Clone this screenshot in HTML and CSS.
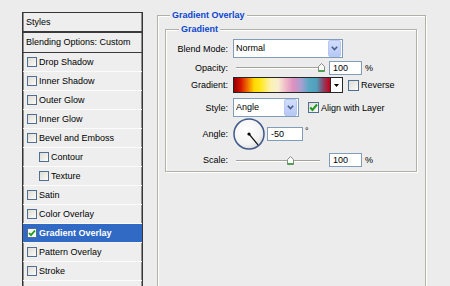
FILE: index.html
```html
<!DOCTYPE html>
<html>
<head>
<meta charset="utf-8">
<link rel="stylesheet" href="styles.css">
</head>
<body>
<div class="dialog">
  <div class="styles-panel">
    <div class="panel-head">Styles</div>
    <div class="panel-blend">Blending Options: Custom</div>
    <ul class="fx-list">
      <li class="fx"><span class="cb"></span>Drop Shadow</li>
      <li class="fx"><span class="cb"></span>Inner Shadow</li>
      <li class="fx"><span class="cb"></span>Outer Glow</li>
      <li class="fx"><span class="cb"></span>Inner Glow</li>
      <li class="fx"><span class="cb"></span>Bevel and Emboss</li>
      <li class="fx sub"><span class="cb"></span>Contour</li>
      <li class="fx sub"><span class="cb"></span>Texture</li>
      <li class="fx"><span class="cb"></span>Satin</li>
      <li class="fx"><span class="cb"></span>Color Overlay</li>
      <li class="fx selected"><span class="cb"><svg class="check" viewBox="0 0 8 8" width="8" height="8"><path d="M1 4 L3 6.2 L7 1.5" fill="none" stroke="#1f9a1f" stroke-width="1.8"/></svg></span>Gradient Overlay</li>
      <li class="fx"><span class="cb"></span>Pattern Overlay</li>
      <li class="fx"><span class="cb"></span>Stroke</li>
    </ul>
  </div>

  <div class="effects">
    <div class="group outer">
      <div class="group-title">Gradient Overlay</div>
      <div class="group inner">
        <div class="group-title">Gradient</div>
        <div class="form">
          <div class="row r-blend">
            <span class="lbl">Blend Mode:</span>
            <div class="combo w-blend">
              <span class="combo-val">Normal</span>
              <span class="combo-btn"><svg viewBox="0 0 7 5" width="7" height="5"><path d="M0.8 0.8 L3.5 3.6 L6.2 0.8" fill="none" stroke="#4a5f88" stroke-width="1.6"/></svg></span>
            </div>
          </div>
          <div class="row r-opacity">
            <span class="lbl">Opacity:</span>
            <div class="slider">
              <div class="track"></div>
              <svg class="handle" style="left:85px" viewBox="0 0 7 9" width="7" height="9"><path d="M0.5 8.5 V3.5 L3.5 0.5 L6.5 3.5 V8.5 Z" fill="#fafafa" stroke="#8a8a8a" stroke-width="1"/><path d="M0.5 7.8 H6.5" stroke="#2aa52a" stroke-width="1.4"/></svg>
            </div>
            <span class="num">100</span>
            <span class="unit">%</span>
          </div>
          <div class="row r-gradient">
            <span class="lbl">Gradient:</span>
            <div class="grad-pick">
              <span class="grad"></span>
              <span class="grad-btn"><svg viewBox="0 0 5 3" width="5" height="3"><path d="M0 0 H5 L2.5 3 Z" fill="#000"/></svg></span>
            </div>
            <span class="cb big reverse-cb"></span>
            <span class="cb-text">Reverse</span>
          </div>
          <div class="row r-style">
            <span class="lbl">Style:</span>
            <div class="combo w-style">
              <span class="combo-val">Angle</span>
              <span class="combo-btn"><svg viewBox="0 0 7 5" width="7" height="5"><path d="M0.8 0.8 L3.5 3.6 L6.2 0.8" fill="none" stroke="#4a5f88" stroke-width="1.6"/></svg></span>
            </div>
            <span class="cb big align-cb"><svg class="check" viewBox="0 0 9 9" width="9" height="9"><path d="M1.2 4.5 L3.5 7 L8 1.5" fill="none" stroke="#1f9a1f" stroke-width="2"/></svg></span>
            <span class="cb-text">Align with Layer</span>
          </div>
          <div class="row r-angle">
            <span class="lbl">Angle:</span>
            <svg class="dial" viewBox="0 0 32 32" width="32" height="32">
              <defs>
                <radialGradient id="dg" cx="0.4" cy="0.35" r="0.7">
                  <stop offset="0" stop-color="#ffffff"/>
                  <stop offset="0.7" stop-color="#f3f3f3"/>
                  <stop offset="1" stop-color="#d8d8d8"/>
                </radialGradient>
              </defs>
              <circle cx="16" cy="16" r="15" fill="url(#dg)" stroke="#40598a" stroke-width="1.5"/>
              <line x1="16" y1="16" x2="25" y2="26.8" stroke="#111" stroke-width="1.2"/>
              <circle cx="16" cy="16" r="1.6" fill="#000"/>
            </svg>
            <span class="num angle-num">-50</span>
            <span class="deg">°</span>
          </div>
          <div class="row r-scale">
            <span class="lbl">Scale:</span>
            <div class="slider">
              <div class="track"></div>
              <svg class="handle" style="left:54px" viewBox="0 0 7 9" width="7" height="9"><path d="M0.5 8.5 V3.5 L3.5 0.5 L6.5 3.5 V8.5 Z" fill="#fafafa" stroke="#8a8a8a" stroke-width="1"/><path d="M0.5 7.8 H6.5" stroke="#2aa52a" stroke-width="1.4"/></svg>
            </div>
            <span class="num">100</span>
            <span class="unit">%</span>
          </div>
        </div>
      </div>
    </div>
  </div>
</div>
</body>
</html>
```

FILE: styles.css
```css
html, body {
  margin: 0;
  padding: 0;
  height: 100%;
  overflow: hidden;
}
body {
  background: #ececec;
  font-family: "Liberation Sans", Arial, sans-serif;
  font-size: 9px;
  color: #000;
}
.dialog {
  display: flex;
  align-items: flex-start;
}

/* ---------- left styles list ---------- */
.styles-panel {
  margin: 12px 0 0 22px;
  width: 121px;
  height: 274px;
  box-sizing: border-box;
  border: 1px solid #363636;
  border-bottom: none;
  box-shadow: inset 1px 0 0 #8d8d8d, inset -1px 0 0 #8d8d8d;
  background: #eeeeee;
  flex: none;
  overflow: hidden;
}
.panel-head {
  height: 18px;
  line-height: 18px;
  padding-left: 3px;
  border-bottom: 2px solid #3a3a3a;
}
.panel-blend {
  height: 19px;
  line-height: 19px;
  padding-left: 3px;
  border-bottom: 1px solid #3a3a3a;
}
.fx-list {
  list-style: none;
  margin: 0;
  padding: 0;
}
.fx {
  height: 18px;
  border-bottom: 1px solid #fbfbfb;
  display: flex;
  align-items: center;
  padding-left: 4px;
  white-space: nowrap;
}
.fx.sub {
  padding-left: 16px;
}
.fx.selected {
  background: #316ac5;
  color: #fff;
  font-weight: bold;
  border-bottom-color: #f4f4f4;
}
.cb {
  width: 10px;
  height: 10px;
  box-sizing: border-box;
  border: 1px solid #4f6f92;
  background: linear-gradient(135deg, #dedcd4, #fbfbf9);
  margin-right: 2px;
  flex: none;
  display: flex;
  align-items: center;
  justify-content: center;
}
.fx.selected .cb {
  background: #f6f6f4;
}
.cb.big {
  width: 11px;
  height: 11px;
}

/* ---------- right group boxes ---------- */
.effects {
  margin: 15px 0 0 14px;
  width: 269px;
  flex: none;
}
.group {
  border: 1px solid #b3b0a8;
  box-shadow: inset 1px 1px 0 #ffffff, 1px 1px 0 #ffffff;
}
.group.outer {
  height: 271px;
  box-sizing: border-box;
  border-bottom: none;
}
.group.inner {
  margin: 8px 8px 0 7px;
  padding-bottom: 3px;
}
.group-title {
  width: fit-content;
  margin: -7px 0 0 12px;
  padding: 0 2px;
  line-height: 12px;
  height: 12px;
  background: #ececec;
  color: #0b46d0;
  font-weight: bold;
  white-space: nowrap;
}
.inner > .group-title {
  margin-left: 13px;
}
.form {
  margin-top: 4px;
}
.row {
  display: flex;
  align-items: center;
  white-space: nowrap;
}
.lbl {
  width: 62px;
  margin-right: 5px;
  text-align: right;
  flex: none;
}
.r-blend { height: 19px; }
.r-opacity { height: 15px; margin-top: 2px; }
.r-gradient { height: 16px; margin-top: 2px; }
.r-style { height: 19px; margin-top: 5px; }
.r-angle { height: 32px; margin-top: 1px; }
.r-scale { height: 16px; margin-top: 2px; }

/* combo */
.combo {
  display: flex;
  height: 19px;
  box-sizing: border-box;
  border: 1px solid #7f9db9;
  background: #fff;
}
.w-blend { width: 110px; }
.w-style { width: 66px; }
.combo-val {
  flex: 1;
  padding-left: 2px;
  line-height: 17px;
}
.combo-btn {
  width: 11px;
  margin: 0 1px 0 0;
  border: 1px solid #b7c8f2;
  border-radius: 2px;
  background: linear-gradient(#d3defd, #b6c8f6);
  display: flex;
  align-items: center;
  justify-content: center;
}

/* slider */
.slider {
  position: relative;
  width: 92px;
  height: 15px;
  box-sizing: border-box;
  padding: 7px 5px 0 3px;
  flex: none;
}
.track {
  height: 0;
  border-top: 1px solid #a3a199;
  border-bottom: 1px solid #ffffff;
}
.handle {
  position: absolute;
  top: 3px;
}
.num {
  width: 33px;
  height: 14px;
  box-sizing: border-box;
  border: 1px solid #7f9db9;
  background: #fff;
  padding-left: 3px;
  line-height: 12px;
  margin-left: 4px;
  flex: none;
}
.unit {
  margin-left: 3px;
}

/* gradient picker */
.grad-pick {
  display: flex;
  height: 16px;
  flex: none;
}
.grad {
  width: 98px;
  box-sizing: border-box;
  border: 1px solid #262626;
  background: linear-gradient(to right,
    #960000 0%, #d41400 7%, #f07000 14%, #ffd800 21%, #ffe820 28%,
    #fbf2b0 38%, #f8eed0 46%, #f0b8c8 54%, #dc90c0 62%,
    #a8a0d0 70%, #58a8c4 78%, #50a0bc 86%, #8a4468 93%, #c40018 100%);
}
.grad-btn {
  width: 12px;
  box-sizing: border-box;
  border: 1px solid #262626;
  border-left: none;
  background: #fff;
  display: flex;
  align-items: center;
  justify-content: center;
}
.reverse-cb {
  margin-left: 5px;
}
.align-cb {
  margin-left: 9px;
}
.cb-text {
  margin-left: 0;
}

/* angle */
.dial {
  flex: none;
}
.angle-num {
  width: 36px;
  margin-left: 2px;
}
.deg {
  margin-left: 2px;
  align-self: flex-start;
  margin-top: 8px;
}
```
